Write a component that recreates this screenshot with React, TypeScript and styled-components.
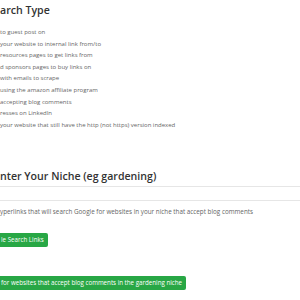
import React from "react";
import styled, { createGlobalStyle } from "styled-components";

const GlobalStyle = createGlobalStyle`
  html, body {
    margin: 0;
    padding: 0;
    background: #fff;
    overflow: hidden;
  }
  body {
    font-family: "Open Sans", "DejaVu Sans", sans-serif;
  }
`;

const searchTypes = [
  "to guest post on",
  "your website to internal link from/to",
  "resources pages to get links from",
  "d sponsors pages to buy links on",
  "with emails to scrape",
  "using the amazon affiliate program",
  "accepting blog comments",
  "resses on LinkedIn",
  "your website that still have the http (not https) version indexed",
];

const Page = styled.div`
  width: 300px;
  height: 300px;
  overflow: hidden;
  padding-top: 3px;
  box-sizing: border-box;
  display: flex;
  flex-direction: column;
  align-items: flex-start;
`;

const Title = styled.h2<{ $gap?: number }>`
  margin: ${({ $gap }) => $gap ?? 0}px 0 0 0;
  font-size: 10.6px;
  line-height: 15px;
  height: 15px;
  font-weight: 600;
  color: #333;
  white-space: nowrap;
`;

const TypeList = styled.div`
  margin-top: 9px;
  display: flex;
  flex-direction: column;
`;

const TypeItem = styled.div`
  font-size: 6px;
  line-height: 11.6px;
  height: 11.6px;
  color: #666;
  white-space: nowrap;
`;

const NicheField = styled.div`
  align-self: stretch;
  box-sizing: border-box;
  height: 15px;
  margin-top: 2px;
  border-top: 1px solid #e6e6e6;
  border-bottom: 1px solid #e6e6e6;
  background: #fff;
`;

const Help = styled.div`
  margin-top: 6px;
  font-size: 6.3px;
  line-height: 10px;
  height: 10px;
  color: #666;
  white-space: nowrap;
`;

const GreenButton = styled.button<{ $gap: number }>`
  display: block;
  box-sizing: border-box;
  margin: ${({ $gap }) => $gap}px 0 0 0;
  height: 14px;
  padding: 0 4px 0 1px;
  border: none;
  border-radius: 0 2px 2px 0;
  background: #28a745;
  color: #fff;
  font-family: inherit;
  font-size: 6.2px;
  line-height: 14px;
  white-space: nowrap;
  cursor: pointer;
`;

export default function App() {
  return (
    <>
      <GlobalStyle />
      <Page>
        <Title>arch Type</Title>
        <TypeList>
          {searchTypes.map((t) => (
            <TypeItem key={t}>{t}</TypeItem>
          ))}
        </TypeList>
        <Title $gap={38}>nter Your Niche (eg gardening)</Title>
        <NicheField />
        <Help>yperlinks that will search Google for websites in your niche that accept blog comments</Help>
        <GreenButton $gap={16}>le Search Links</GreenButton>
        <GreenButton $gap={29}>for websites that accept blog comments in the gardening niche</GreenButton>
      </Page>
    </>
  );
}
